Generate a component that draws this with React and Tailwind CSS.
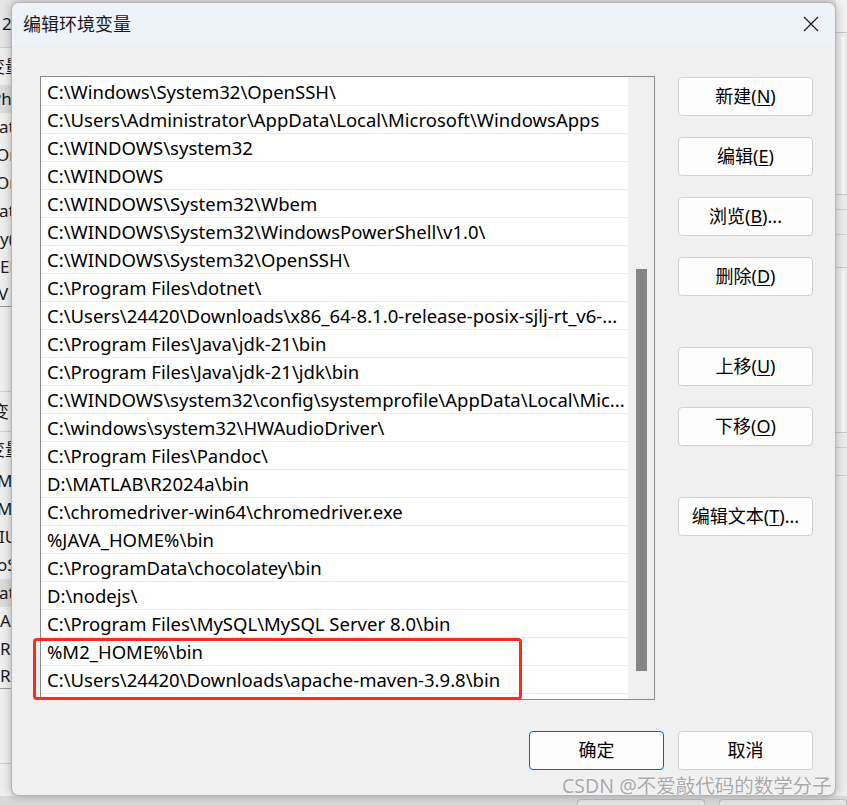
import React from 'react'

const paths = [
  'C:\\Windows\\System32\\OpenSSH\\',
  'C:\\Users\\Administrator\\AppData\\Local\\Microsoft\\WindowsApps',
  'C:\\WINDOWS\\system32',
  'C:\\WINDOWS',
  'C:\\WINDOWS\\System32\\Wbem',
  'C:\\WINDOWS\\System32\\WindowsPowerShell\\v1.0\\',
  'C:\\WINDOWS\\System32\\OpenSSH\\',
  'C:\\Program Files\\dotnet\\',
  'C:\\Users\\24420\\Downloads\\x86_64-8.1.0-release-posix-sjlj-rt_v6-...',
  'C:\\Program Files\\Java\\jdk-21\\bin',
  'C:\\Program Files\\Java\\jdk-21\\jdk\\bin',
  'C:\\WINDOWS\\system32\\config\\systemprofile\\AppData\\Local\\Mic...',
  'C:\\windows\\system32\\HWAudioDriver\\',
  'C:\\Program Files\\Pandoc\\',
  'D:\\MATLAB\\R2024a\\bin',
  'C:\\chromedriver-win64\\chromedriver.exe',
  '%JAVA_HOME%\\bin',
  'C:\\ProgramData\\chocolatey\\bin',
  'D:\\nodejs\\',
  'C:\\Program Files\\MySQL\\MySQL Server 8.0\\bin',
  '%M2_HOME%\\bin',
  'C:\\Users\\24420\\Downloads\\apache-maven-3.9.8\\bin',
]

// 左侧被对话框挡住的"环境变量"窗口，只露出右边一点点
const behindRows = [
  { h: 47, text: '2', cls: 'bg-[#e6e6e6]', shift: 'ml-[2px]' },
  { h: 38, text: '变量', cls: 'border-t border-[#cfcfcf]', shift: 'ml-[-12px]' },
  { h: 28, text: 'Ph', cls: 'bg-[#dcdcdc]', shift: 'ml-[-9px]' },
  { h: 28, text: 'at', cls: '', shift: 'ml-[-1px]' },
  { h: 28, text: 'On', cls: '', shift: 'ml-[-4px]' },
  { h: 28, text: 'On', cls: '', shift: 'ml-[-4px]' },
  { h: 28, text: 'at', cls: '', shift: 'ml-[-1px]' },
  { h: 28, text: 'y(', cls: '', shift: 'ml-[0px]' },
  { h: 28, text: 'El', cls: '', shift: 'ml-[0px]' },
  { h: 26, text: 'V', cls: 'border-b border-[#9a9a9a]', shift: 'ml-[-2px]' },
  { h: 85, text: '', cls: 'border-b border-[#cfcfcf]', shift: '' },
  { h: 40, text: '变', cls: 'border-b border-[#cfcfcf]', shift: 'ml-[-8px]' },
  { h: 35, text: '变量', cls: '', shift: 'ml-[-12px]' },
  { h: 28, text: 'M2', cls: '', shift: 'ml-[-3px]' },
  { h: 28, text: 'MA', cls: '', shift: 'ml-[-3px]' },
  { h: 28, text: 'IU', cls: '', shift: 'ml-[-1px]' },
  { h: 28, text: 'oS', cls: '', shift: 'ml-[-3px]' },
  { h: 28, text: 'at', cls: 'bg-[#dcdcdc]', shift: 'ml-[-1px]' },
  { h: 28, text: 'A', cls: '', shift: 'ml-[0px]' },
  { h: 28, text: 'R', cls: '', shift: 'ml-[0px]' },
  { h: 26, text: 'R', cls: 'border-b border-[#9a9a9a]', shift: 'ml-[0px]' },
  { h: 75, text: '', cls: 'border-b border-[#cfcfcf]', shift: '' },
]

const font = { fontFamily: '"Noto Sans", "Noto Sans CJK SC", sans-serif' }

function WinButton({ zh, k, tail = '', primary = false }) {
  return (
    <button
      type="button"
      className={
        'flex h-[39px] w-[135px] items-center justify-center rounded-[4px] bg-[#fdfdfd] text-[18px] text-black ' +
        (primary ? 'border border-[#0067c0]' : 'border border-[#d0d0d0]')
      }
    >
      <span>{zh}</span>
      {k && (
        <span>
          (<span className="underline underline-offset-2">{k}</span>)
        </span>
      )}
      {tail && <span>{tail}</span>}
    </button>
  )
}

function CloseIcon() {
  return (
    <svg width="16" height="16" viewBox="0 0 16 16" fill="none">
      <path d="M1 1L15 15M15 1L1 15" stroke="#1b1b1b" strokeWidth="1.2" />
    </svg>
  )
}

export default function App() {
  return (
    <div
      className="relative flex h-[805px] w-[847px] flex-col overflow-hidden bg-[#e4e4e4]"
      style={font}
    >
      <div className="flex h-[796px]">
        {/* 背后窗口的左边缘 */}
        <div className="flex w-[11px] flex-col overflow-hidden bg-[#efefef] text-[17px] text-[#1a1a1a]">
          {behindRows.map((r, i) => (
            <div
              key={i}
              style={{ height: r.h }}
              className={'flex shrink-0 items-center whitespace-nowrap ' + r.cls}
            >
              <span className={r.shift}>{r.text}</span>
            </div>
          ))}
        </div>

        {/* 对话框 */}
        <div className="relative z-10 mt-[2px] flex h-[794px] w-[825px] flex-col overflow-hidden rounded-[8px] border border-[#b4b4b4] bg-[#f0f0f0] shadow-[0_0_10px_rgba(0,0,0,0.28)]">
          <div className="flex h-[42px] shrink-0 items-center justify-between bg-[#eef2f9] pl-[11px] pr-[16px]">
            <span className="text-[18px] text-[#1a1a1a]">编辑环境变量</span>
            <CloseIcon />
          </div>

          <div className="flex gap-[23px] pl-[28px] pt-[31px]">
            {/* 路径列表 */}
            <div className="relative flex h-[624px] w-[615px] border border-[#8a8a8a] bg-white">
              <div className="flex w-[587px] flex-col pt-[1px]">
                {paths.map((p) => (
                  <div
                    key={p}
                    className="flex h-[28px] shrink-0 items-center overflow-hidden whitespace-nowrap border-b border-[#ebebeb] pl-[6px] text-[18.5px] text-black"
                  >
                    {p}
                  </div>
                ))}
              </div>
              <div className="flex w-[26px] flex-col items-center bg-[#f0f0f0] pt-[192px]">
                <div className="h-[402px] w-[11px] bg-[#858585]" />
              </div>
              {/* 红框标注 */}
              <div className="absolute left-[-8px] top-[561px] h-[62px] w-[489px] rounded-[4px] border-[3px] border-[#ff2a1f]" />
            </div>

            {/* 右侧按钮 */}
            <div className="flex flex-col pt-[1px]">
              <div className="flex flex-col gap-[21px]">
                <WinButton zh="新建" k="N" />
                <WinButton zh="编辑" k="E" />
                <WinButton zh="浏览" k="B" tail="..." />
                <WinButton zh="删除" k="D" />
              </div>
              <div className="mt-[51px] flex flex-col gap-[21px]">
                <WinButton zh="上移" k="U" />
                <WinButton zh="下移" k="O" />
              </div>
              <div className="mt-[51px]">
                <WinButton zh="编辑文本" k="T" tail="..." />
              </div>
            </div>
          </div>

          <div className="flex justify-end gap-[14px] pr-[22px] pt-[31px]">
            <WinButton zh="确定" primary />
            <WinButton zh="取消" />
          </div>
        </div>

        {/* 背后窗口的右边缘 */}
        <div className="flex flex-1 flex-col bg-[#ececec]">
          <div className="h-[33px] border-b border-[#c8c8c8] bg-[#f2f2f2]" />
          <div className="flex h-[162px] justify-end border-b border-[#c8c8c8] pr-[2px] pt-[3px]">
            <div className="h-full w-[4px] bg-[#f7f7f7]" />
          </div>
          <div className="h-[15px] border-b border-[#d0d0d0]" />
          <div className="h-[25px] border-b border-[#d0d0d0]" />
          <div className="h-[33px] border-b border-[#c8c8c8]" />
          <div className="flex h-[165px] justify-end border-b border-[#c8c8c8] pr-[2px] pt-[3px]">
            <div className="h-full w-[4px] bg-[#f7f7f7]" />
          </div>
          <div className="h-[15px] border-b border-[#d0d0d0]" />
          <div className="h-[28px] border-b border-[#d0d0d0]" />
          <div className="flex-1" />
        </div>
      </div>

      {/* 底部露出的背后窗口按钮 */}
      <div className="flex flex-1 gap-[14px] bg-[#d9d9d9] pl-[577px] pt-[3px]">
        <div className="w-[135px] rounded-t-[4px] border border-b-0 border-[#bdbdbd] bg-[#e6e6e6]" />
        <div className="w-[135px] rounded-t-[4px] border border-b-0 border-[#bdbdbd] bg-[#e6e6e6]" />
      </div>

      {/* CSDN 水印 */}
      <div
        className="absolute left-[562px] top-[773px] z-20 whitespace-nowrap text-[19.5px] leading-[26px] text-[#a8a8a8] [text-shadow:0_0_2px_#ffffff,0_0_1px_#ffffff]"
      >
        CSDN @不爱敲代码的数学分子
      </div>
    </div>
  )
}
